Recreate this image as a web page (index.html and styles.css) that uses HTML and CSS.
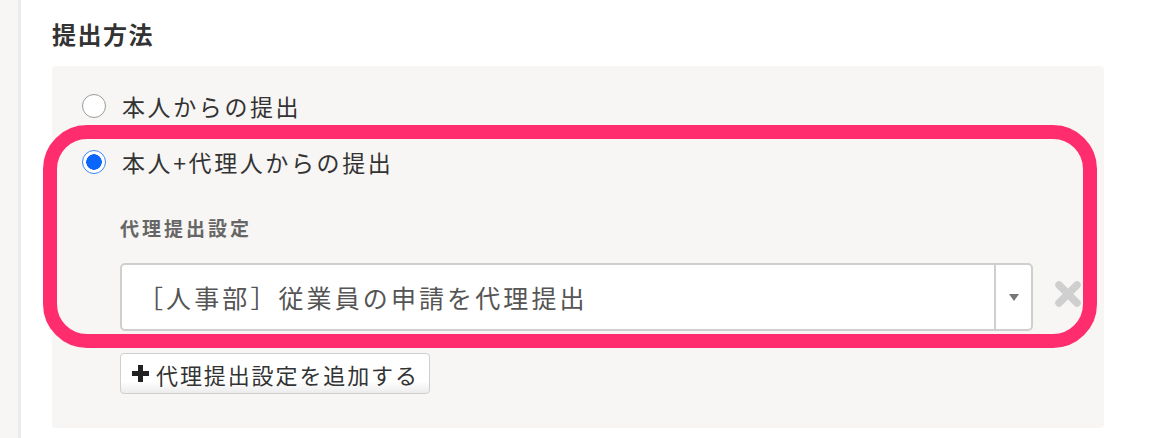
FILE: index.html
```html
<!DOCTYPE html>
<html lang="ja">
<head>
<meta charset="utf-8">
<title>提出方法</title>
<link rel="stylesheet" href="styles.css">
</head>
<body>
<div class="page">
  <div class="card">
    <h2 class="title">提出方法</h2>
    <div class="panel">
      <label class="radio-row">
        <span class="radio"></span>
        <span class="radio-text">本人からの提出</span>
      </label>
      <label class="radio-row">
        <span class="radio checked"></span>
        <span class="radio-text">本人+代理人からの提出</span>
      </label>
      <div class="sub">
        <div class="sub-label">代理提出設定</div>
        <div class="select-row">
          <div class="select">
            <span class="select-text">［人事部］従業員の申請を代理提出</span>
            <span class="select-arrow"><svg width="12" height="9" viewBox="0 0 12 9"><path d="M1 1H11L6 8Z" fill="#777"/></svg></span>
          </div>
          <span class="remove"><svg width="28" height="28" viewBox="0 0 28 28"><path d="M5 5L23 23M23 5L5 23" stroke="#cfcfcf" stroke-width="7.5" stroke-linecap="round"/></svg></span>
        </div>
        <button class="add-btn" type="button"><svg class="plus" width="21" height="21" viewBox="0 0 21 21"><path d="M10.5 2V19M2 10.5H19" stroke="#222" stroke-width="5"/></svg><span class="add-text">代理提出設定を追加する</span></button>
      </div>
    </div>
  </div>
  <div class="highlight"></div>
</div>
</body>
</html>
```

FILE: styles.css
```css
html, body {
  margin: 0;
  padding: 0;
}
body {
  background: #f7f6f4;
  font-family: "Noto Sans CJK JP", "Noto Sans", sans-serif;
  color: #333;
}
.page {
  position: relative;
  width: 1162px;
  height: 438px;
  overflow: hidden;
}
.card {
  margin-left: 18px;
  width: 1112px;
  height: 438px;
  background: #fff;
  border-left: 3px solid #ebebea;
  border-right: 4px solid #ebebea;
  padding-left: 31px;
  box-sizing: content-box;
}
.title {
  margin: 0;
  padding-top: 18px;
  height: 66px;
  box-sizing: border-box;
  font-size: 24px;
  line-height: 32px;
  font-weight: 700;
  letter-spacing: 1.5px;
  color: #333;
}
.panel {
  width: 1052px;
  height: 362px;
  box-sizing: border-box;
  background: #f7f6f4;
  border-radius: 4px;
  padding: 25px 0 0 30px;
}
.radio-row {
  display: flex;
  align-items: center;
  height: 30px;
  margin-bottom: 26px;
}
.radio {
  width: 24px;
  height: 24px;
  box-sizing: border-box;
  border-radius: 50%;
  border: 1.5px solid #9a9a9a;
  background: #fff;
  margin-right: 16px;
  flex: none;
}
.radio.checked {
  border: 1.5px solid #3d86f7;
  background: radial-gradient(circle, #0a66fb 0 7.5px, #fff 8px);
}
.radio-text {
  font-size: 23px;
  line-height: 30px;
  letter-spacing: 2.6px;
  color: #333;
}
.sub {
  margin-left: 38px;
  margin-top: 39px;
}
.sub-label {
  font-size: 19px;
  line-height: 24px;
  font-weight: 700;
  letter-spacing: 3px;
  color: #666;
}
.select-row {
  display: flex;
  align-items: center;
  margin-top: 23px;
}
.select {
  width: 913px;
  height: 68px;
  box-sizing: border-box;
  border: 2px solid #cfcfcf;
  border-radius: 5px;
  background: #fff;
  display: flex;
  align-items: center;
}
.select-text {
  flex: 1;
  padding-left: 16px;
  font-size: 25px;
  letter-spacing: 3.1px;
  color: #555;
}
.select-arrow {
  width: 35px;
  align-self: stretch;
  border-left: 2px solid #cfcfcf;
  display: flex;
  align-items: center;
  justify-content: center;
}
.remove {
  margin-left: 21px;
  margin-bottom: 6px;
  display: flex;
}
.add-btn {
  margin-top: 22px;
  width: 310px;
  height: 41px;
  box-sizing: border-box;
  border: 1.5px solid #cfcfcf;
  border-radius: 4px;
  background: linear-gradient(#fff 0%, #fff 70%, #ececec 100%);
  display: flex;
  align-items: center;
  padding: 0 0 0 9px;
  font-family: "Noto Sans CJK JP", "Noto Sans", sans-serif;
  font-size: 22px;
  line-height: 28px;
  letter-spacing: 1.9px;
  color: #333;
}
.plus {
  margin-right: 5px;
  flex: none;
}
.highlight {
  position: absolute;
  left: 43px;
  top: 125px;
  width: 1054px;
  height: 223px;
  box-sizing: border-box;
  border: 14px solid #ff2d6e;
  border-radius: 44px;
  pointer-events: none;
}
```
